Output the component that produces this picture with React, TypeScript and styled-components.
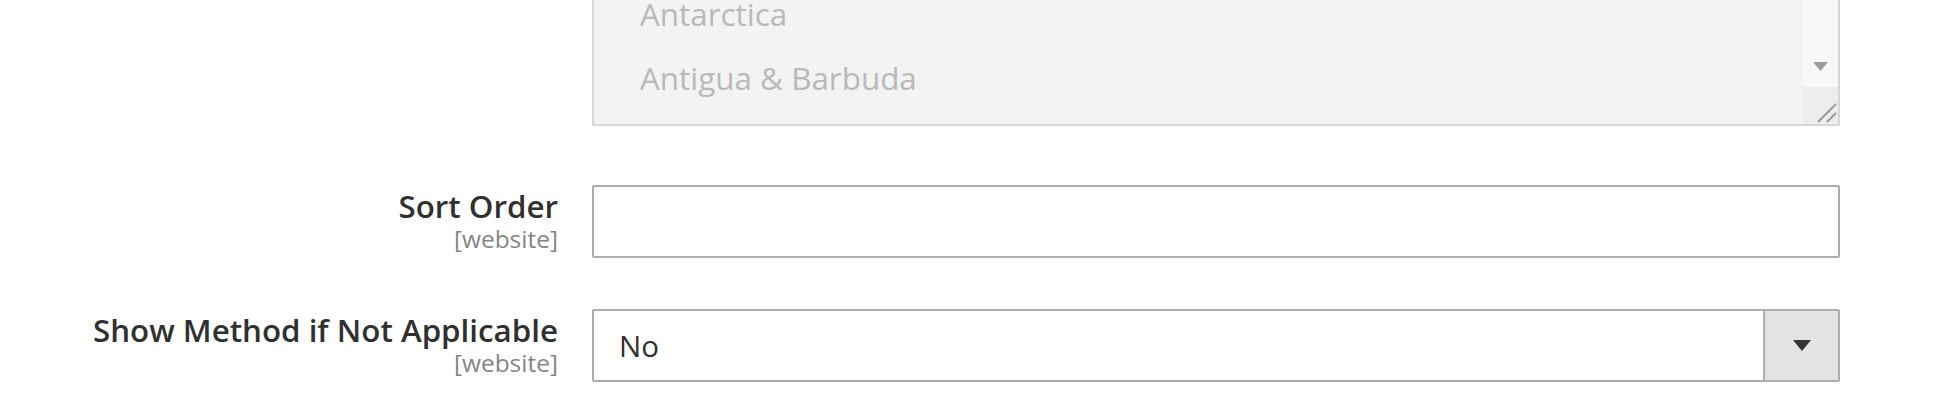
import React from "react";
import styled, { createGlobalStyle } from "styled-components";

const Global = createGlobalStyle`
  html, body { margin: 0; padding: 0; background: #ffffff; }
  body { font-family: "Open Sans", "Noto Sans", sans-serif; color: #303030; }
  * { box-sizing: border-box; }
`;

const Page = styled.div`
  width: 1952px;
  height: 415px;
  overflow: hidden;
`;

const Row = styled.div<{ $after: number }>`
  display: grid;
  grid-template-columns: 558px 1248px;
  column-gap: 34px;
  align-items: start;
  margin-bottom: ${(p) => p.$after}px;
`;

const LabelCell = styled.div`
  padding-top: 2px;
  text-align: right;
  display: flex;
  flex-direction: column;
  align-items: flex-end;
`;

const Label = styled.span`
  font-size: 31.3px;
  line-height: 38px;
  font-weight: 600;
  color: #303030;
  white-space: nowrap;
`;

const Scope = styled.span`
  margin-top: 1px;
  font-size: 24.5px;
  line-height: 26px;
  color: #858585;
`;

const MultiBox = styled.div`
  height: 126px;
  display: flex;
  background: #f3f3f3;
  border: 2px solid #d6d6d6;
  border-top: none;
  border-radius: 0 0 2px 2px;
  overflow: hidden;
`;

const OptionList = styled.div`
  flex: 1;
  display: flex;
  flex-direction: column;
  justify-content: flex-end;
  padding: 0 0 14px 46px;
  overflow: hidden;
`;

const Option = styled.div`
  font-size: 31.4px;
  line-height: 64px;
  color: #b9b9b9;
  white-space: nowrap;
`;

const Scrollbar = styled.div`
  width: 35px;
  display: flex;
  flex-direction: column;
  background: #f8f8f8;
`;

const Track = styled.div`
  flex: 1;
`;

const ScrollButton = styled.div`
  height: 42px;
  display: flex;
  align-items: center;
  justify-content: center;
`;

const Corner = styled.div`
  height: 37px;
  background: #ededed;
  display: flex;
  align-items: flex-end;
  justify-content: flex-end;
`;

const TextInput = styled.input`
  height: 73px;
  width: 100%;
  border: 2px solid #adadad;
  border-radius: 2px;
  background: #ffffff;
  font-family: inherit;
  font-size: 29px;
  padding: 0 26px;
  outline: none;
`;

const SelectBox = styled.div`
  height: 73px;
  display: flex;
  border: 2px solid #adadad;
  border-radius: 2px;
  background: #ffffff;
`;

const SelectValue = styled.div`
  flex: 1;
  display: flex;
  align-items: center;
  padding-left: 25px;
  font-size: 29.5px;
  color: #303030;
`;

const SelectButton = styled.div`
  width: 75px;
  background: #e3e3e3;
  border-left: 2px solid #adadad;
  display: flex;
  align-items: center;
  justify-content: center;
`;

export default function App() {
  return (
    <>
      <Global />
      <Page>
        <Row $after={59}>
          <LabelCell />
          <MultiBox>
            <OptionList>
              <Option>Andorra</Option>
              <Option>Angola</Option>
              <Option>Anguilla</Option>
              <Option>Antarctica</Option>
              <Option>Antigua &amp; Barbuda</Option>
            </OptionList>
            <Scrollbar>
              <Track />
              <ScrollButton>
                <svg width="15" height="9" viewBox="0 0 15 9">
                  <path d="M0 0 L15 0 L7.5 9 Z" fill="#9c9c9c" />
                </svg>
              </ScrollButton>
              <Corner>
                <svg width="24" height="24" viewBox="0 0 24 24">
                  <path d="M4 22 L22 4 M13 22 L22 13" stroke="#9a9a9a" strokeWidth="2" />
                </svg>
              </Corner>
            </Scrollbar>
          </MultiBox>
        </Row>
        <Row $after={51}>
          <LabelCell>
            <Label>Sort Order</Label>
            <Scope>[website]</Scope>
          </LabelCell>
          <TextInput type="text" defaultValue="" />
        </Row>
        <Row $after={0}>
          <LabelCell>
            <Label>Show Method if Not Applicable</Label>
            <Scope>[website]</Scope>
          </LabelCell>
          <SelectBox>
            <SelectValue>No</SelectValue>
            <SelectButton>
              <svg width="18" height="11" viewBox="0 0 18 11">
                <path d="M0 0 L18 0 L9 11 Z" fill="#333333" />
              </svg>
            </SelectButton>
          </SelectBox>
        </Row>
      </Page>
    </>
  );
}
